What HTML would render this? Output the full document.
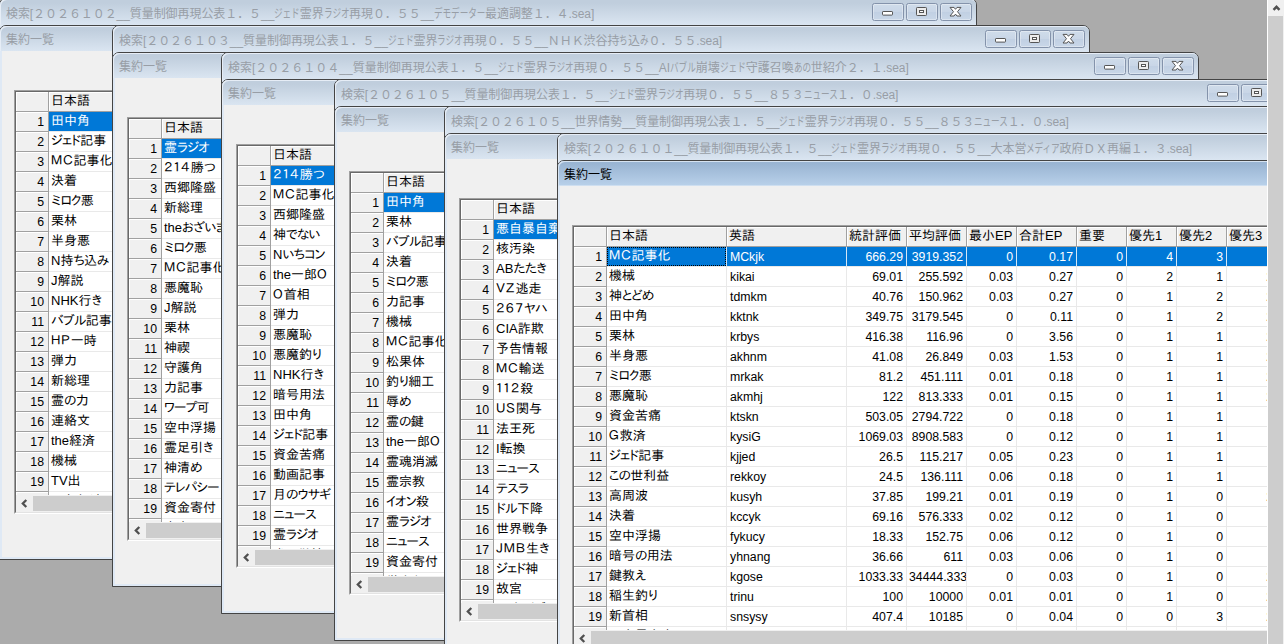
<!DOCTYPE html><html lang="ja"><head><meta charset="utf-8"><title>検索</title><style>
*{box-sizing:border-box;margin:0;padding:0}
html,body{width:1284px;height:644px;overflow:hidden;background:#ababab}
body{position:relative;font-family:"Liberation Sans","IPAPGothic","IPAGothic",sans-serif;font-size:13px;color:#000}
#mdi{position:absolute;left:0;top:0;width:1267px;height:644px;overflow:hidden;background:#ababab}
.win{position:absolute;isolation:isolate;width:978px;height:562px;border:1px solid #444;border-radius:7px 7px 0 0;background:#dfe9f5}
.t1{position:absolute;left:0;top:0;right:0;height:26px;border-radius:6px 6px 0 0;background:linear-gradient(#c0cedd 0,#c0cedd 4px,#dae5f1 100%);box-shadow:inset 1px 1px 0 #e6edf6}
.ttl{position:absolute;left:6px;top:7px;font-family:"Liberation Sans","Noto Sans CJK JP",sans-serif;font-size:12px;line-height:16px;color:#989ea6;white-space:nowrap}
.ttl .k{display:inline-block;transform-origin:0 50%;white-space:nowrap}
.inner{position:absolute;left:-1px;right:-1px;top:26px;bottom:-1px;border:1px solid #444;border-radius:7px 7px 0 0;background:#dfe9f5}
.t2{position:absolute;left:0;top:0;right:0;height:25px;border-radius:6px 6px 0 0;background:linear-gradient(#c0cedd 0,#c0cedd 4px,#dae5f1 100%);box-shadow:inset 1px 1px 0 #e6edf6}
.act .t2{background:linear-gradient(#9ab5d3 0,#9ab5d3 3px,#b9d1ea 100%);box-shadow:inset 1px 1px 0 #d6e3f1,inset 0 -1px 0 #cfdff0}
.act .t2 .ttl{color:#000}
.cont{position:absolute;left:2px;right:2px;top:25px;bottom:2px;background:#f0f0f0;overflow:hidden}
.btn{position:absolute;top:4px;width:32px;height:18px;border:1px solid #8493ab;border-radius:2.5px;background:linear-gradient(#cfdcea 0,#c9d6e7 48%,#c1d0e3 52%,#c9d7e8 100%);box-shadow:inset 0 0 0 1px rgba(255,255,255,.35)}
.btn svg{position:absolute;left:0;top:0}
.grid{position:absolute;left:12px;top:39px;width:1000px;height:424px;border:1px solid #a0a0a0;border-right-color:#fff;border-bottom-color:#fff;background:#fff;overflow:hidden}
.grid:before{content:"";position:absolute;left:0;top:0;right:0;bottom:0;border:1px solid #696969;border-right-color:#e3e3e3;border-bottom-color:#e3e3e3;z-index:5;pointer-events:none}
.gi{position:absolute;left:1px;top:1px;right:1px;bottom:1px;overflow:hidden}
.r{position:absolute;left:0;height:20px;white-space:nowrap;display:flex}
.c{height:20px;border-right:1px solid #e9e9e9;border-bottom:1px solid #e9e9e9;line-height:17px;padding:0 3px 0 2px;overflow:hidden;white-space:nowrap;flex:none;font-size:13px}
.f{background:#f0f0f0;border-right:1px solid #a0a0a0;border-bottom:1px solid #a0a0a0;box-shadow:inset 1px 1px 0 #fff}
.n{text-align:right;font-size:12.3px;line-height:21px}
.e{font-size:12.3px;padding-left:3px;line-height:21px}
.c .k{letter-spacing:-.8px}
.c .w{letter-spacing:1px}
.foc{position:relative}
.foc:after{content:"";position:absolute;left:0;top:0;right:0;bottom:0;border:1px dotted #000}
.f.n{padding-right:4px}
.s{background:#0078d7;color:#fff;border-right-color:#d4e6f6;border-bottom-color:#e9e9e9}
.hs{position:absolute;left:0;right:0;bottom:0;height:17px;background:#f0f0f0}
.hs i{position:absolute;left:17px;top:1px;bottom:1px;right:0;background:#cdcdcd}
.hs svg{position:absolute;left:0;top:0}
#vs{position:absolute;left:1267px;top:0;width:17px;height:644px;background:#f0f0f0;border-left:1px solid #fff}
#vs i{position:absolute;left:0;top:16px;width:15px;bottom:0;background:#cdcdcd}
#vs svg{position:absolute;left:0;top:0}
</style></head><body><div id="mdi"><div class="win" style="left:-1px;top:-2px"><div class="t1"><div class="ttl" style="letter-spacing:-0.072px">検索[２０２６１０２__質量制御再現公表１．５__<span class="k" style="transform:scaleX(0.717);margin-right:-10.2px">ジェド</span>霊界<span class="k" style="transform:scaleX(0.717);margin-right:-10.2px">ラジオ</span>再現０．５５__<span class="k" style="transform:scaleX(0.717);margin-right:-20.4px">デモデーター</span>最適調整１．４.sea]</div><div class="btn" style="left:872px"><svg width="30" height="16" viewBox="0 0 30 16"><rect x="9.5" y="7.5" width="10" height="3.6" rx="0.6" fill="#fff" stroke="#555" stroke-width="1"/></svg></div><div class="btn" style="left:906px"><svg width="30" height="16" viewBox="0 0 30 16"><rect x="9.5" y="3.5" width="10" height="8" rx="0.8" fill="#ececec" stroke="#555" stroke-width="1"/><rect x="12.5" y="6.5" width="4" height="2" fill="#fff" stroke="#555" stroke-width="1"/></svg></div><div class="btn" style="left:940px"><svg width="30" height="16" viewBox="0 0 30 16"><path transform="translate(9,3.4)" d="M0 0H4L5.5 1.9 7 0H11L7.5 4.3 11 8.6H7L5.5 6.7 4 8.6H0L3.5 4.3Z" fill="#fff" stroke="#555" stroke-width="1" stroke-linejoin="round"/></svg></div></div><div class="inner"><div class="t2"><div class="ttl" style="top:6px">集約一覧</div></div><div class="cont"><div class="grid"><div class="gi"><div class="r" style="top:0"><div class="c f" style="width:33px"></div><div class="c f" style="width:120px">日本語</div><div class="c f" style="width:120px">英語</div><div class="c f" style="width:60px">統計評価</div></div><div class="r" style="top:20px"><div class="c f n" style="width:33px">1</div><div class="c s" style="width:120px">田中角</div><div class="c e" style="width:120px"></div></div><div class="r" style="top:40px"><div class="c f n" style="width:33px">2</div><div class="c" style="width:120px"><span class="k">ジェド</span>記事</div><div class="c e" style="width:120px"></div></div><div class="r" style="top:60px"><div class="c f n" style="width:33px">3</div><div class="c" style="width:120px"><span class="w">ＭＣ</span>記事化</div><div class="c e" style="width:120px"></div></div><div class="r" style="top:80px"><div class="c f n" style="width:33px">4</div><div class="c" style="width:120px">決着</div><div class="c e" style="width:120px"></div></div><div class="r" style="top:100px"><div class="c f n" style="width:33px">5</div><div class="c" style="width:120px"><span class="k">ミロク</span>悪</div><div class="c e" style="width:120px"></div></div><div class="r" style="top:120px"><div class="c f n" style="width:33px">6</div><div class="c" style="width:120px">栗林</div><div class="c e" style="width:120px"></div></div><div class="r" style="top:140px"><div class="c f n" style="width:33px">7</div><div class="c" style="width:120px">半身悪</div><div class="c e" style="width:120px"></div></div><div class="r" style="top:160px"><div class="c f n" style="width:33px">8</div><div class="c" style="width:120px">N持<span class="k">ち</span>込<span class="k">み</span></div><div class="c e" style="width:120px"></div></div><div class="r" style="top:180px"><div class="c f n" style="width:33px">9</div><div class="c" style="width:120px">J解説</div><div class="c e" style="width:120px"></div></div><div class="r" style="top:200px"><div class="c f n" style="width:33px">10</div><div class="c" style="width:120px">NHK行<span class="k">き</span></div><div class="c e" style="width:120px"></div></div><div class="r" style="top:220px"><div class="c f n" style="width:33px">11</div><div class="c" style="width:120px"><span class="k">バブル</span>記事</div><div class="c e" style="width:120px"></div></div><div class="r" style="top:240px"><div class="c f n" style="width:33px">12</div><div class="c" style="width:120px"><span class="w">ＨＰ</span>一時</div><div class="c e" style="width:120px"></div></div><div class="r" style="top:260px"><div class="c f n" style="width:33px">13</div><div class="c" style="width:120px">弾力</div><div class="c e" style="width:120px"></div></div><div class="r" style="top:280px"><div class="c f n" style="width:33px">14</div><div class="c" style="width:120px">新総理</div><div class="c e" style="width:120px"></div></div><div class="r" style="top:300px"><div class="c f n" style="width:33px">15</div><div class="c" style="width:120px">霊<span class="k">の</span>力</div><div class="c e" style="width:120px"></div></div><div class="r" style="top:320px"><div class="c f n" style="width:33px">16</div><div class="c" style="width:120px">連絡文</div><div class="c e" style="width:120px"></div></div><div class="r" style="top:340px"><div class="c f n" style="width:33px">17</div><div class="c" style="width:120px">the経済</div><div class="c e" style="width:120px"></div></div><div class="r" style="top:360px"><div class="c f n" style="width:33px">18</div><div class="c" style="width:120px">機械</div><div class="c e" style="width:120px"></div></div><div class="r" style="top:380px"><div class="c f n" style="width:33px">19</div><div class="c" style="width:120px">TV出</div><div class="c e" style="width:120px"></div></div><div class="r" style="top:400px"><div class="c f n" style="width:33px">20</div><div class="c" style="width:120px">三角経済</div><div class="c e" style="width:120px"></div></div><div class="hs"><svg width="17" height="17" viewBox="0 0 17 17"><path d="M10.3 5L6.8 8.5l3.5 3.5" fill="none" stroke="#505050" stroke-width="2.3"/></svg><i></i></div></div></div></div></div></div>
<div class="win" style="left:112px;top:25px"><div class="t1"><div class="ttl" style="letter-spacing:-0.050px">検索[２０２６１０３__質量制御再現公表１．５__<span class="k" style="transform:scaleX(0.717);margin-right:-10.2px">ジェド</span>霊界<span class="k" style="transform:scaleX(0.717);margin-right:-10.2px">ラジオ</span>再現０．５５__ＮＨＫ渋谷持<span class="k" style="transform:scaleX(0.717);margin-right:-3.4px">ち</span>込<span class="k" style="transform:scaleX(0.717);margin-right:-3.4px">み</span>０．５５.sea]</div><div class="btn" style="left:872px"><svg width="30" height="16" viewBox="0 0 30 16"><rect x="9.5" y="7.5" width="10" height="3.6" rx="0.6" fill="#fff" stroke="#555" stroke-width="1"/></svg></div><div class="btn" style="left:906px"><svg width="30" height="16" viewBox="0 0 30 16"><rect x="9.5" y="3.5" width="10" height="8" rx="0.8" fill="#ececec" stroke="#555" stroke-width="1"/><rect x="12.5" y="6.5" width="4" height="2" fill="#fff" stroke="#555" stroke-width="1"/></svg></div><div class="btn" style="left:940px"><svg width="30" height="16" viewBox="0 0 30 16"><path transform="translate(9,3.4)" d="M0 0H4L5.5 1.9 7 0H11L7.5 4.3 11 8.6H7L5.5 6.7 4 8.6H0L3.5 4.3Z" fill="#fff" stroke="#555" stroke-width="1" stroke-linejoin="round"/></svg></div></div><div class="inner"><div class="t2"><div class="ttl" style="top:6px">集約一覧</div></div><div class="cont"><div class="grid"><div class="gi"><div class="r" style="top:0"><div class="c f" style="width:33px"></div><div class="c f" style="width:120px">日本語</div><div class="c f" style="width:120px">英語</div><div class="c f" style="width:60px">統計評価</div></div><div class="r" style="top:20px"><div class="c f n" style="width:33px">1</div><div class="c s" style="width:120px">霊<span class="k">ラジオ</span></div><div class="c e" style="width:120px"></div></div><div class="r" style="top:40px"><div class="c f n" style="width:33px">2</div><div class="c" style="width:120px"><span class="w">２１４</span>勝<span class="k">つ</span></div><div class="c e" style="width:120px"></div></div><div class="r" style="top:60px"><div class="c f n" style="width:33px">3</div><div class="c" style="width:120px">西郷隆盛</div><div class="c e" style="width:120px"></div></div><div class="r" style="top:80px"><div class="c f n" style="width:33px">4</div><div class="c" style="width:120px">新総理</div><div class="c e" style="width:120px"></div></div><div class="r" style="top:100px"><div class="c f n" style="width:33px">5</div><div class="c" style="width:120px">the<span class="k">おざいます</span></div><div class="c e" style="width:120px"></div></div><div class="r" style="top:120px"><div class="c f n" style="width:33px">6</div><div class="c" style="width:120px"><span class="k">ミロク</span>悪</div><div class="c e" style="width:120px"></div></div><div class="r" style="top:140px"><div class="c f n" style="width:33px">7</div><div class="c" style="width:120px"><span class="w">ＭＣ</span>記事化</div><div class="c e" style="width:120px"></div></div><div class="r" style="top:160px"><div class="c f n" style="width:33px">8</div><div class="c" style="width:120px">悪魔恥</div><div class="c e" style="width:120px"></div></div><div class="r" style="top:180px"><div class="c f n" style="width:33px">9</div><div class="c" style="width:120px">J解説</div><div class="c e" style="width:120px"></div></div><div class="r" style="top:200px"><div class="c f n" style="width:33px">10</div><div class="c" style="width:120px">栗林</div><div class="c e" style="width:120px"></div></div><div class="r" style="top:220px"><div class="c f n" style="width:33px">11</div><div class="c" style="width:120px">神禊</div><div class="c e" style="width:120px"></div></div><div class="r" style="top:240px"><div class="c f n" style="width:33px">12</div><div class="c" style="width:120px">守護角</div><div class="c e" style="width:120px"></div></div><div class="r" style="top:260px"><div class="c f n" style="width:33px">13</div><div class="c" style="width:120px">力記事</div><div class="c e" style="width:120px"></div></div><div class="r" style="top:280px"><div class="c f n" style="width:33px">14</div><div class="c" style="width:120px"><span class="k">ワープ</span>可</div><div class="c e" style="width:120px"></div></div><div class="r" style="top:300px"><div class="c f n" style="width:33px">15</div><div class="c" style="width:120px">空中浮揚</div><div class="c e" style="width:120px"></div></div><div class="r" style="top:320px"><div class="c f n" style="width:33px">16</div><div class="c" style="width:120px">霊足引<span class="k">き</span></div><div class="c e" style="width:120px"></div></div><div class="r" style="top:340px"><div class="c f n" style="width:33px">17</div><div class="c" style="width:120px">神清<span class="k">め</span></div><div class="c e" style="width:120px"></div></div><div class="r" style="top:360px"><div class="c f n" style="width:33px">18</div><div class="c" style="width:120px"><span class="k">テレパシー</span></div><div class="c e" style="width:120px"></div></div><div class="r" style="top:380px"><div class="c f n" style="width:33px">19</div><div class="c" style="width:120px">資金寄付</div><div class="c e" style="width:120px"></div></div><div class="r" style="top:400px"><div class="c f n" style="width:33px">20</div><div class="c" style="width:120px">半身悪</div><div class="c e" style="width:120px"></div></div><div class="hs"><svg width="17" height="17" viewBox="0 0 17 17"><path d="M10.3 5L6.8 8.5l3.5 3.5" fill="none" stroke="#505050" stroke-width="2.3"/></svg><i></i></div></div></div></div></div></div>
<div class="win" style="left:221px;top:52px"><div class="t1"><div class="ttl" style="letter-spacing:-0.003px">検索[２０２６１０４__質量制御再現公表１．５__<span class="k" style="transform:scaleX(0.717);margin-right:-10.2px">ジェド</span>霊界<span class="k" style="transform:scaleX(0.717);margin-right:-10.2px">ラジオ</span>再現０．５５__AI<span class="k" style="transform:scaleX(0.717);margin-right:-10.2px">バブル</span>崩壊<span class="k" style="transform:scaleX(0.717);margin-right:-10.2px">ジェド</span>守護召喚<span class="k" style="transform:scaleX(0.717);margin-right:-6.8px">あの</span>世紹介２．１.sea]</div><div class="btn" style="left:872px"><svg width="30" height="16" viewBox="0 0 30 16"><rect x="9.5" y="7.5" width="10" height="3.6" rx="0.6" fill="#fff" stroke="#555" stroke-width="1"/></svg></div><div class="btn" style="left:906px"><svg width="30" height="16" viewBox="0 0 30 16"><rect x="9.5" y="3.5" width="10" height="8" rx="0.8" fill="#ececec" stroke="#555" stroke-width="1"/><rect x="12.5" y="6.5" width="4" height="2" fill="#fff" stroke="#555" stroke-width="1"/></svg></div><div class="btn" style="left:940px"><svg width="30" height="16" viewBox="0 0 30 16"><path transform="translate(9,3.4)" d="M0 0H4L5.5 1.9 7 0H11L7.5 4.3 11 8.6H7L5.5 6.7 4 8.6H0L3.5 4.3Z" fill="#fff" stroke="#555" stroke-width="1" stroke-linejoin="round"/></svg></div></div><div class="inner"><div class="t2"><div class="ttl" style="top:6px">集約一覧</div></div><div class="cont"><div class="grid"><div class="gi"><div class="r" style="top:0"><div class="c f" style="width:33px"></div><div class="c f" style="width:120px">日本語</div><div class="c f" style="width:120px">英語</div><div class="c f" style="width:60px">統計評価</div></div><div class="r" style="top:20px"><div class="c f n" style="width:33px">1</div><div class="c s" style="width:120px"><span class="w">２１４</span>勝<span class="k">つ</span></div><div class="c e" style="width:120px"></div></div><div class="r" style="top:40px"><div class="c f n" style="width:33px">2</div><div class="c" style="width:120px"><span class="w">ＭＣ</span>記事化</div><div class="c e" style="width:120px"></div></div><div class="r" style="top:60px"><div class="c f n" style="width:33px">3</div><div class="c" style="width:120px">西郷隆盛</div><div class="c e" style="width:120px"></div></div><div class="r" style="top:80px"><div class="c f n" style="width:33px">4</div><div class="c" style="width:120px">神<span class="k">でない</span></div><div class="c e" style="width:120px"></div></div><div class="r" style="top:100px"><div class="c f n" style="width:33px">5</div><div class="c" style="width:120px">N<span class="k">いちコン</span></div><div class="c e" style="width:120px"></div></div><div class="r" style="top:120px"><div class="c f n" style="width:33px">6</div><div class="c" style="width:120px">the一郎<span class="w">Ｏ</span></div><div class="c e" style="width:120px"></div></div><div class="r" style="top:140px"><div class="c f n" style="width:33px">7</div><div class="c" style="width:120px"><span class="w">Ｏ</span>首相</div><div class="c e" style="width:120px"></div></div><div class="r" style="top:160px"><div class="c f n" style="width:33px">8</div><div class="c" style="width:120px">弾力</div><div class="c e" style="width:120px"></div></div><div class="r" style="top:180px"><div class="c f n" style="width:33px">9</div><div class="c" style="width:120px">悪魔恥</div><div class="c e" style="width:120px"></div></div><div class="r" style="top:200px"><div class="c f n" style="width:33px">10</div><div class="c" style="width:120px">悪魔釣<span class="k">り</span></div><div class="c e" style="width:120px"></div></div><div class="r" style="top:220px"><div class="c f n" style="width:33px">11</div><div class="c" style="width:120px">NHK行<span class="k">き</span></div><div class="c e" style="width:120px"></div></div><div class="r" style="top:240px"><div class="c f n" style="width:33px">12</div><div class="c" style="width:120px">暗号用法</div><div class="c e" style="width:120px"></div></div><div class="r" style="top:260px"><div class="c f n" style="width:33px">13</div><div class="c" style="width:120px">田中角</div><div class="c e" style="width:120px"></div></div><div class="r" style="top:280px"><div class="c f n" style="width:33px">14</div><div class="c" style="width:120px"><span class="k">ジェド</span>記事</div><div class="c e" style="width:120px"></div></div><div class="r" style="top:300px"><div class="c f n" style="width:33px">15</div><div class="c" style="width:120px">資金苦痛</div><div class="c e" style="width:120px"></div></div><div class="r" style="top:320px"><div class="c f n" style="width:33px">16</div><div class="c" style="width:120px">動画記事</div><div class="c e" style="width:120px"></div></div><div class="r" style="top:340px"><div class="c f n" style="width:33px">17</div><div class="c" style="width:120px">月<span class="k">のウサギ</span></div><div class="c e" style="width:120px"></div></div><div class="r" style="top:360px"><div class="c f n" style="width:33px">18</div><div class="c" style="width:120px"><span class="k">ニュース</span></div><div class="c e" style="width:120px"></div></div><div class="r" style="top:380px"><div class="c f n" style="width:33px">19</div><div class="c" style="width:120px">霊<span class="k">ラジオ</span></div><div class="c e" style="width:120px"></div></div><div class="r" style="top:400px"><div class="c f n" style="width:33px">20</div><div class="c" style="width:120px">雀<span class="k">の</span>学校</div><div class="c e" style="width:120px"></div></div><div class="hs"><svg width="17" height="17" viewBox="0 0 17 17"><path d="M10.3 5L6.8 8.5l3.5 3.5" fill="none" stroke="#505050" stroke-width="2.3"/></svg><i></i></div></div></div></div></div></div>
<div class="win" style="left:334px;top:79px"><div class="t1"><div class="ttl" style="letter-spacing:-0.095px">検索[２０２６１０５__質量制御再現公表１．５__<span class="k" style="transform:scaleX(0.717);margin-right:-10.2px">ジェド</span>霊界<span class="k" style="transform:scaleX(0.717);margin-right:-10.2px">ラジオ</span>再現０．５５__８５３<span class="k" style="transform:scaleX(0.717);margin-right:-13.6px">ニュース</span>１．０.sea]</div><div class="btn" style="left:872px"><svg width="30" height="16" viewBox="0 0 30 16"><rect x="9.5" y="7.5" width="10" height="3.6" rx="0.6" fill="#fff" stroke="#555" stroke-width="1"/></svg></div><div class="btn" style="left:906px"><svg width="30" height="16" viewBox="0 0 30 16"><rect x="9.5" y="3.5" width="10" height="8" rx="0.8" fill="#ececec" stroke="#555" stroke-width="1"/><rect x="12.5" y="6.5" width="4" height="2" fill="#fff" stroke="#555" stroke-width="1"/></svg></div><div class="btn" style="left:940px"><svg width="30" height="16" viewBox="0 0 30 16"><path transform="translate(9,3.4)" d="M0 0H4L5.5 1.9 7 0H11L7.5 4.3 11 8.6H7L5.5 6.7 4 8.6H0L3.5 4.3Z" fill="#fff" stroke="#555" stroke-width="1" stroke-linejoin="round"/></svg></div></div><div class="inner"><div class="t2"><div class="ttl" style="top:6px">集約一覧</div></div><div class="cont"><div class="grid"><div class="gi"><div class="r" style="top:0"><div class="c f" style="width:33px"></div><div class="c f" style="width:120px">日本語</div><div class="c f" style="width:120px">英語</div><div class="c f" style="width:60px">統計評価</div></div><div class="r" style="top:20px"><div class="c f n" style="width:33px">1</div><div class="c s" style="width:120px">田中角</div><div class="c e" style="width:120px"></div></div><div class="r" style="top:40px"><div class="c f n" style="width:33px">2</div><div class="c" style="width:120px">栗林</div><div class="c e" style="width:120px"></div></div><div class="r" style="top:60px"><div class="c f n" style="width:33px">3</div><div class="c" style="width:120px"><span class="k">バブル</span>記事</div><div class="c e" style="width:120px"></div></div><div class="r" style="top:80px"><div class="c f n" style="width:33px">4</div><div class="c" style="width:120px">決着</div><div class="c e" style="width:120px"></div></div><div class="r" style="top:100px"><div class="c f n" style="width:33px">5</div><div class="c" style="width:120px"><span class="k">ミロク</span>悪</div><div class="c e" style="width:120px"></div></div><div class="r" style="top:120px"><div class="c f n" style="width:33px">6</div><div class="c" style="width:120px">力記事</div><div class="c e" style="width:120px"></div></div><div class="r" style="top:140px"><div class="c f n" style="width:33px">7</div><div class="c" style="width:120px">機械</div><div class="c e" style="width:120px"></div></div><div class="r" style="top:160px"><div class="c f n" style="width:33px">8</div><div class="c" style="width:120px"><span class="w">ＭＣ</span>記事化</div><div class="c e" style="width:120px"></div></div><div class="r" style="top:180px"><div class="c f n" style="width:33px">9</div><div class="c" style="width:120px">松果体</div><div class="c e" style="width:120px"></div></div><div class="r" style="top:200px"><div class="c f n" style="width:33px">10</div><div class="c" style="width:120px">釣<span class="k">り</span>細工</div><div class="c e" style="width:120px"></div></div><div class="r" style="top:220px"><div class="c f n" style="width:33px">11</div><div class="c" style="width:120px">辱<span class="k">め</span></div><div class="c e" style="width:120px"></div></div><div class="r" style="top:240px"><div class="c f n" style="width:33px">12</div><div class="c" style="width:120px">霊<span class="k">の</span>鍵</div><div class="c e" style="width:120px"></div></div><div class="r" style="top:260px"><div class="c f n" style="width:33px">13</div><div class="c" style="width:120px">the一郎<span class="w">Ｏ</span></div><div class="c e" style="width:120px"></div></div><div class="r" style="top:280px"><div class="c f n" style="width:33px">14</div><div class="c" style="width:120px">霊魂消滅</div><div class="c e" style="width:120px"></div></div><div class="r" style="top:300px"><div class="c f n" style="width:33px">15</div><div class="c" style="width:120px">霊宗教</div><div class="c e" style="width:120px"></div></div><div class="r" style="top:320px"><div class="c f n" style="width:33px">16</div><div class="c" style="width:120px"><span class="k">イオン</span>殺</div><div class="c e" style="width:120px"></div></div><div class="r" style="top:340px"><div class="c f n" style="width:33px">17</div><div class="c" style="width:120px">霊<span class="k">ラジオ</span></div><div class="c e" style="width:120px"></div></div><div class="r" style="top:360px"><div class="c f n" style="width:33px">18</div><div class="c" style="width:120px"><span class="k">ニュース</span></div><div class="c e" style="width:120px"></div></div><div class="r" style="top:380px"><div class="c f n" style="width:33px">19</div><div class="c" style="width:120px">資金寄付</div><div class="c e" style="width:120px"></div></div><div class="r" style="top:400px"><div class="c f n" style="width:33px">20</div><div class="c" style="width:120px">巣立<span class="k">ち</span>口</div><div class="c e" style="width:120px"></div></div><div class="hs"><svg width="17" height="17" viewBox="0 0 17 17"><path d="M10.3 5L6.8 8.5l3.5 3.5" fill="none" stroke="#505050" stroke-width="2.3"/></svg><i></i></div></div></div></div></div></div>
<div class="win" style="left:444px;top:106px"><div class="t1"><div class="ttl" style="letter-spacing:-0.099px">検索[２０２６１０５__世界情勢__質量制御再現公表１．５__<span class="k" style="transform:scaleX(0.717);margin-right:-10.2px">ジェド</span>霊界<span class="k" style="transform:scaleX(0.717);margin-right:-10.2px">ラジオ</span>再現０．５５__８５３<span class="k" style="transform:scaleX(0.717);margin-right:-13.6px">ニュース</span>１．０.sea]</div><div class="btn" style="left:872px"><svg width="30" height="16" viewBox="0 0 30 16"><rect x="9.5" y="7.5" width="10" height="3.6" rx="0.6" fill="#fff" stroke="#555" stroke-width="1"/></svg></div><div class="btn" style="left:906px"><svg width="30" height="16" viewBox="0 0 30 16"><rect x="9.5" y="3.5" width="10" height="8" rx="0.8" fill="#ececec" stroke="#555" stroke-width="1"/><rect x="12.5" y="6.5" width="4" height="2" fill="#fff" stroke="#555" stroke-width="1"/></svg></div><div class="btn" style="left:940px"><svg width="30" height="16" viewBox="0 0 30 16"><path transform="translate(9,3.4)" d="M0 0H4L5.5 1.9 7 0H11L7.5 4.3 11 8.6H7L5.5 6.7 4 8.6H0L3.5 4.3Z" fill="#fff" stroke="#555" stroke-width="1" stroke-linejoin="round"/></svg></div></div><div class="inner"><div class="t2"><div class="ttl" style="top:6px">集約一覧</div></div><div class="cont"><div class="grid"><div class="gi"><div class="r" style="top:0"><div class="c f" style="width:33px"></div><div class="c f" style="width:120px">日本語</div><div class="c f" style="width:120px">英語</div><div class="c f" style="width:60px">統計評価</div></div><div class="r" style="top:20px"><div class="c f n" style="width:33px">1</div><div class="c s" style="width:120px">悪自暴自棄</div><div class="c e" style="width:120px"></div></div><div class="r" style="top:40px"><div class="c f n" style="width:33px">2</div><div class="c" style="width:120px">核汚染</div><div class="c e" style="width:120px"></div></div><div class="r" style="top:60px"><div class="c f n" style="width:33px">3</div><div class="c" style="width:120px">AB<span class="k">たたき</span></div><div class="c e" style="width:120px"></div></div><div class="r" style="top:80px"><div class="c f n" style="width:33px">4</div><div class="c" style="width:120px"><span class="w">ＶＺ</span>逃走</div><div class="c e" style="width:120px"></div></div><div class="r" style="top:100px"><div class="c f n" style="width:33px">5</div><div class="c" style="width:120px"><span class="w">２６７</span><span class="k">ヤハ</span></div><div class="c e" style="width:120px"></div></div><div class="r" style="top:120px"><div class="c f n" style="width:33px">6</div><div class="c" style="width:120px">CIA詐欺</div><div class="c e" style="width:120px"></div></div><div class="r" style="top:140px"><div class="c f n" style="width:33px">7</div><div class="c" style="width:120px">予告情報</div><div class="c e" style="width:120px"></div></div><div class="r" style="top:160px"><div class="c f n" style="width:33px">8</div><div class="c" style="width:120px"><span class="w">ＭＣ</span>輸送</div><div class="c e" style="width:120px"></div></div><div class="r" style="top:180px"><div class="c f n" style="width:33px">9</div><div class="c" style="width:120px"><span class="w">１１２</span>殺</div><div class="c e" style="width:120px"></div></div><div class="r" style="top:200px"><div class="c f n" style="width:33px">10</div><div class="c" style="width:120px"><span class="w">ＵＳ</span>関与</div><div class="c e" style="width:120px"></div></div><div class="r" style="top:220px"><div class="c f n" style="width:33px">11</div><div class="c" style="width:120px">法王死</div><div class="c e" style="width:120px"></div></div><div class="r" style="top:240px"><div class="c f n" style="width:33px">12</div><div class="c" style="width:120px">I転換</div><div class="c e" style="width:120px"></div></div><div class="r" style="top:260px"><div class="c f n" style="width:33px">13</div><div class="c" style="width:120px"><span class="k">ニュース</span></div><div class="c e" style="width:120px"></div></div><div class="r" style="top:280px"><div class="c f n" style="width:33px">14</div><div class="c" style="width:120px"><span class="k">テスラ</span></div><div class="c e" style="width:120px"></div></div><div class="r" style="top:300px"><div class="c f n" style="width:33px">15</div><div class="c" style="width:120px"><span class="k">ドル</span>下降</div><div class="c e" style="width:120px"></div></div><div class="r" style="top:320px"><div class="c f n" style="width:33px">16</div><div class="c" style="width:120px">世界戦争</div><div class="c e" style="width:120px"></div></div><div class="r" style="top:340px"><div class="c f n" style="width:33px">17</div><div class="c" style="width:120px"><span class="w">ＪＭＢ</span>生<span class="k">き</span></div><div class="c e" style="width:120px"></div></div><div class="r" style="top:360px"><div class="c f n" style="width:33px">18</div><div class="c" style="width:120px"><span class="k">ジェド</span>神</div><div class="c e" style="width:120px"></div></div><div class="r" style="top:380px"><div class="c f n" style="width:33px">19</div><div class="c" style="width:120px">故宮</div><div class="c e" style="width:120px"></div></div><div class="r" style="top:400px"><div class="c f n" style="width:33px">20</div><div class="c" style="width:120px">天才<span class="k">バブル</span></div><div class="c e" style="width:120px"></div></div><div class="hs"><svg width="17" height="17" viewBox="0 0 17 17"><path d="M10.3 5L6.8 8.5l3.5 3.5" fill="none" stroke="#505050" stroke-width="2.3"/></svg><i></i></div></div></div></div></div></div>
<div class="win act" style="left:557px;top:133px"><div class="t1"><div class="ttl" style="letter-spacing:-0.102px">検索[２０２６１０１__質量制御再現公表１．５__<span class="k" style="transform:scaleX(0.717);margin-right:-10.2px">ジェド</span>霊界<span class="k" style="transform:scaleX(0.717);margin-right:-10.2px">ラジオ</span>再現０．５５__大本営<span class="k" style="transform:scaleX(0.717);margin-right:-13.6px">メディア</span>政府ＤＸ再編１．３.sea]</div><div class="btn" style="left:872px"><svg width="30" height="16" viewBox="0 0 30 16"><rect x="9.5" y="7.5" width="10" height="3.6" rx="0.6" fill="#fff" stroke="#555" stroke-width="1"/></svg></div><div class="btn" style="left:906px"><svg width="30" height="16" viewBox="0 0 30 16"><rect x="9.5" y="3.5" width="10" height="8" rx="0.8" fill="#ececec" stroke="#555" stroke-width="1"/><rect x="12.5" y="6.5" width="4" height="2" fill="#fff" stroke="#555" stroke-width="1"/></svg></div><div class="btn" style="left:940px"><svg width="30" height="16" viewBox="0 0 30 16"><path transform="translate(9,3.4)" d="M0 0H4L5.5 1.9 7 0H11L7.5 4.3 11 8.6H7L5.5 6.7 4 8.6H0L3.5 4.3Z" fill="#fff" stroke="#555" stroke-width="1" stroke-linejoin="round"/></svg></div></div><div class="inner"><div class="t2"><div class="ttl" style="top:6px">集約一覧</div></div><div class="cont"><div class="grid"><div class="gi"><div class="r" style="top:0"><div class="c f" style="width:33px"></div><div class="c f" style="width:120px">日本語</div><div class="c f" style="width:120px">英語</div><div class="c f" style="width:60px">統計評価</div><div class="c f" style="width:60px">平均評価</div><div class="c f" style="width:50px">最小EP</div><div class="c f" style="width:60px">合計EP</div><div class="c f" style="width:50px">重要</div><div class="c f" style="width:50px">優先1</div><div class="c f" style="width:50px">優先2</div><div class="c f" style="width:50px">優先3</div></div><div class="r" style="top:20px"><div class="c f n" style="width:33px">1</div><div class="c s foc" style="width:120px"><span class="w">ＭＣ</span>記事化</div><div class="c e s" style="width:120px">MCkjk</div><div class="c n s" style="width:60px">666.29</div><div class="c n s" style="width:60px">3919.352</div><div class="c n s" style="width:50px">0</div><div class="c n s" style="width:60px">0.17</div><div class="c n s" style="width:50px">0</div><div class="c n s" style="width:50px">4</div><div class="c n s" style="width:50px">3</div><div class="c n s" style="width:50px"></div></div><div class="r" style="top:40px"><div class="c f n" style="width:33px">2</div><div class="c" style="width:120px">機械</div><div class="c e" style="width:120px">kikai</div><div class="c n" style="width:60px">69.01</div><div class="c n" style="width:60px">255.592</div><div class="c n" style="width:50px">0.03</div><div class="c n" style="width:60px">0.27</div><div class="c n" style="width:50px">0</div><div class="c n" style="width:50px">2</div><div class="c n" style="width:50px">1</div><div class="c n" style="width:50px">2</div></div><div class="r" style="top:60px"><div class="c f n" style="width:33px">3</div><div class="c" style="width:120px">神<span class="k">とどめ</span></div><div class="c e" style="width:120px">tdmkm</div><div class="c n" style="width:60px">40.76</div><div class="c n" style="width:60px">150.962</div><div class="c n" style="width:50px">0.03</div><div class="c n" style="width:60px">0.27</div><div class="c n" style="width:50px">0</div><div class="c n" style="width:50px">1</div><div class="c n" style="width:50px">2</div><div class="c n" style="width:50px">2</div></div><div class="r" style="top:80px"><div class="c f n" style="width:33px">4</div><div class="c" style="width:120px">田中角</div><div class="c e" style="width:120px">kktnk</div><div class="c n" style="width:60px">349.75</div><div class="c n" style="width:60px">3179.545</div><div class="c n" style="width:50px">0</div><div class="c n" style="width:60px">0.11</div><div class="c n" style="width:50px">0</div><div class="c n" style="width:50px">1</div><div class="c n" style="width:50px">2</div><div class="c n" style="width:50px">2</div></div><div class="r" style="top:100px"><div class="c f n" style="width:33px">5</div><div class="c" style="width:120px">栗林</div><div class="c e" style="width:120px">krbys</div><div class="c n" style="width:60px">416.38</div><div class="c n" style="width:60px">116.96</div><div class="c n" style="width:50px">0</div><div class="c n" style="width:60px">3.56</div><div class="c n" style="width:50px">0</div><div class="c n" style="width:50px">1</div><div class="c n" style="width:50px">1</div><div class="c n" style="width:50px">2</div></div><div class="r" style="top:120px"><div class="c f n" style="width:33px">6</div><div class="c" style="width:120px">半身悪</div><div class="c e" style="width:120px">akhnm</div><div class="c n" style="width:60px">41.08</div><div class="c n" style="width:60px">26.849</div><div class="c n" style="width:50px">0.03</div><div class="c n" style="width:60px">1.53</div><div class="c n" style="width:50px">0</div><div class="c n" style="width:50px">1</div><div class="c n" style="width:50px">1</div><div class="c n" style="width:50px">2</div></div><div class="r" style="top:140px"><div class="c f n" style="width:33px">7</div><div class="c" style="width:120px"><span class="k">ミロク</span>悪</div><div class="c e" style="width:120px">mrkak</div><div class="c n" style="width:60px">81.2</div><div class="c n" style="width:60px">451.111</div><div class="c n" style="width:50px">0.01</div><div class="c n" style="width:60px">0.18</div><div class="c n" style="width:50px">0</div><div class="c n" style="width:50px">1</div><div class="c n" style="width:50px">1</div><div class="c n" style="width:50px">2</div></div><div class="r" style="top:160px"><div class="c f n" style="width:33px">8</div><div class="c" style="width:120px">悪魔恥</div><div class="c e" style="width:120px">akmhj</div><div class="c n" style="width:60px">122</div><div class="c n" style="width:60px">813.333</div><div class="c n" style="width:50px">0.01</div><div class="c n" style="width:60px">0.15</div><div class="c n" style="width:50px">0</div><div class="c n" style="width:50px">1</div><div class="c n" style="width:50px">1</div><div class="c n" style="width:50px">2</div></div><div class="r" style="top:180px"><div class="c f n" style="width:33px">9</div><div class="c" style="width:120px">資金苦痛</div><div class="c e" style="width:120px">ktskn</div><div class="c n" style="width:60px">503.05</div><div class="c n" style="width:60px">2794.722</div><div class="c n" style="width:50px">0</div><div class="c n" style="width:60px">0.18</div><div class="c n" style="width:50px">0</div><div class="c n" style="width:50px">1</div><div class="c n" style="width:50px">1</div><div class="c n" style="width:50px"></div></div><div class="r" style="top:200px"><div class="c f n" style="width:33px">10</div><div class="c" style="width:120px"><span class="w">Ｇ</span>救済</div><div class="c e" style="width:120px">kysiG</div><div class="c n" style="width:60px">1069.03</div><div class="c n" style="width:60px">8908.583</div><div class="c n" style="width:50px">0</div><div class="c n" style="width:60px">0.12</div><div class="c n" style="width:50px">0</div><div class="c n" style="width:50px">1</div><div class="c n" style="width:50px">1</div><div class="c n" style="width:50px"></div></div><div class="r" style="top:220px"><div class="c f n" style="width:33px">11</div><div class="c" style="width:120px"><span class="k">ジェド</span>記事</div><div class="c e" style="width:120px">kjjed</div><div class="c n" style="width:60px">26.5</div><div class="c n" style="width:60px">115.217</div><div class="c n" style="width:50px">0.05</div><div class="c n" style="width:60px">0.23</div><div class="c n" style="width:50px">0</div><div class="c n" style="width:50px">1</div><div class="c n" style="width:50px">1</div><div class="c n" style="width:50px"></div></div><div class="r" style="top:240px"><div class="c f n" style="width:33px">12</div><div class="c" style="width:120px"><span class="k">この</span>世利益</div><div class="c e" style="width:120px">rekkoy</div><div class="c n" style="width:60px">24.5</div><div class="c n" style="width:60px">136.111</div><div class="c n" style="width:50px">0.06</div><div class="c n" style="width:60px">0.18</div><div class="c n" style="width:50px">0</div><div class="c n" style="width:50px">1</div><div class="c n" style="width:50px">1</div><div class="c n" style="width:50px"></div></div><div class="r" style="top:260px"><div class="c f n" style="width:33px">13</div><div class="c" style="width:120px">高周波</div><div class="c e" style="width:120px">kusyh</div><div class="c n" style="width:60px">37.85</div><div class="c n" style="width:60px">199.21</div><div class="c n" style="width:50px">0.01</div><div class="c n" style="width:60px">0.19</div><div class="c n" style="width:50px">0</div><div class="c n" style="width:50px">1</div><div class="c n" style="width:50px">0</div><div class="c n" style="width:50px">2</div></div><div class="r" style="top:280px"><div class="c f n" style="width:33px">14</div><div class="c" style="width:120px">決着</div><div class="c e" style="width:120px">kccyk</div><div class="c n" style="width:60px">69.16</div><div class="c n" style="width:60px">576.333</div><div class="c n" style="width:50px">0.02</div><div class="c n" style="width:60px">0.12</div><div class="c n" style="width:50px">0</div><div class="c n" style="width:50px">1</div><div class="c n" style="width:50px">0</div><div class="c n" style="width:50px"></div></div><div class="r" style="top:300px"><div class="c f n" style="width:33px">15</div><div class="c" style="width:120px">空中浮揚</div><div class="c e" style="width:120px">fykucy</div><div class="c n" style="width:60px">18.33</div><div class="c n" style="width:60px">152.75</div><div class="c n" style="width:50px">0.06</div><div class="c n" style="width:60px">0.12</div><div class="c n" style="width:50px">0</div><div class="c n" style="width:50px">1</div><div class="c n" style="width:50px">0</div><div class="c n" style="width:50px"></div></div><div class="r" style="top:320px"><div class="c f n" style="width:33px">16</div><div class="c" style="width:120px">暗号<span class="k">の</span>用法</div><div class="c e" style="width:120px">yhnang</div><div class="c n" style="width:60px">36.66</div><div class="c n" style="width:60px">611</div><div class="c n" style="width:50px">0.03</div><div class="c n" style="width:60px">0.06</div><div class="c n" style="width:50px">0</div><div class="c n" style="width:50px">1</div><div class="c n" style="width:50px">0</div><div class="c n" style="width:50px"></div></div><div class="r" style="top:340px"><div class="c f n" style="width:33px">17</div><div class="c" style="width:120px">鍵教<span class="k">え</span></div><div class="c e" style="width:120px">kgose</div><div class="c n" style="width:60px">1033.33</div><div class="c n" style="width:60px">34444.333</div><div class="c n" style="width:50px">0</div><div class="c n" style="width:60px">0.03</div><div class="c n" style="width:50px">0</div><div class="c n" style="width:50px">1</div><div class="c n" style="width:50px">0</div><div class="c n" style="width:50px">2</div></div><div class="r" style="top:360px"><div class="c f n" style="width:33px">18</div><div class="c" style="width:120px">稲生釣<span class="k">り</span></div><div class="c e" style="width:120px">trinu</div><div class="c n" style="width:60px">100</div><div class="c n" style="width:60px">10000</div><div class="c n" style="width:50px">0.01</div><div class="c n" style="width:60px">0.01</div><div class="c n" style="width:50px">0</div><div class="c n" style="width:50px">1</div><div class="c n" style="width:50px">0</div><div class="c n" style="width:50px">2</div></div><div class="r" style="top:380px"><div class="c f n" style="width:33px">19</div><div class="c" style="width:120px">新首相</div><div class="c e" style="width:120px">snsysy</div><div class="c n" style="width:60px">407.4</div><div class="c n" style="width:60px">10185</div><div class="c n" style="width:50px">0</div><div class="c n" style="width:60px">0.04</div><div class="c n" style="width:50px">0</div><div class="c n" style="width:50px">0</div><div class="c n" style="width:50px">3</div><div class="c n" style="width:50px">2</div></div><div class="r" style="top:400px"><div class="c f n" style="width:33px">20</div><div class="c" style="width:120px">悪自暴自棄</div><div class="c e" style="width:120px">akjbjk</div><div class="c n" style="width:60px">12.5</div><div class="c n" style="width:60px">104.2</div><div class="c n" style="width:50px">0</div><div class="c n" style="width:60px">0.02</div><div class="c n" style="width:50px">0</div><div class="c n" style="width:50px">0</div><div class="c n" style="width:50px">1</div><div class="c n" style="width:50px"></div></div><div class="hs"><svg width="17" height="17" viewBox="0 0 17 17"><path d="M10.3 5L6.8 8.5l3.5 3.5" fill="none" stroke="#505050" stroke-width="2.3"/></svg><i></i></div></div></div></div></div></div>
</div><div id="vs"><svg width="17" height="17" viewBox="0 0 17 17"><path d="M5.5 9.8L8.5 6.8l3 3" fill="none" stroke="#505050" stroke-width="2.4"/></svg><i></i></div></body></html>
